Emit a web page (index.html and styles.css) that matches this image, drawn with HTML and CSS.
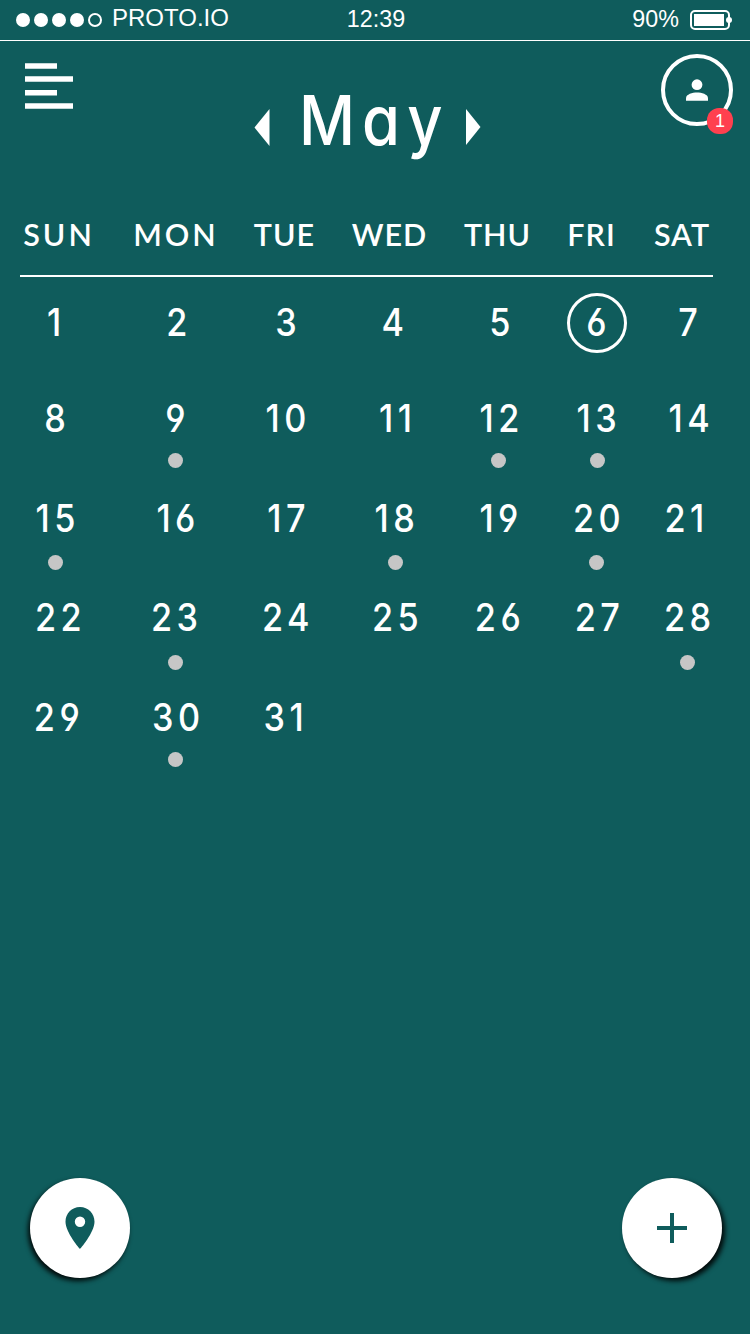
FILE: index.html
```html
<!DOCTYPE html>
<html lang="en">
<head>
<meta charset="utf-8">
<title>Calendar</title>
<link rel="stylesheet" href="styles.css">
</head>
<body>
<div class="screen">
  <header class="status">
    <div class="carrier">
      <span class="signal"><i></i><i></i><i></i><i></i><i class="hollow"></i></span>
      <span class="carrier-name">PROTO.IO</span>
    </div>
    <div class="clock">12:39</div>
    <div class="power">
      <span>90%</span>
      <svg class="battery" width="44" height="22" viewBox="0 0 44 22"><rect x="2" y="2" width="38" height="18" rx="4" fill="none" stroke="#fff" stroke-width="2"/><rect x="5" y="5" width="30" height="12" fill="#fff"/><circle cx="40" cy="11" r="3" fill="#fff"/></svg>
    </div>
  </header>
  <nav class="toolbar">
    <svg class="menu" width="48" height="46" viewBox="0 0 48 46"><path d="M0 .2h32v5.500H0zM0 13.300h48v5.500H0zM0 27h32v5.500H0zM0 40.200h48v5.500H0z" fill="#fff"/></svg>
    <div class="month">
      <svg width="17" height="38" viewBox="0 0 17 38"><path d="M15.500 0v37L.5 18.500z" fill="#fff"/></svg>
      <h1>May</h1>
      <svg width="17" height="38" viewBox="0 0 17 38"><path d="M0 0v36l14.500-18z" fill="#fff"/></svg>
    </div>
    <div class="profile">
      <svg width="28" height="28" viewBox="0 0 28 28"><circle cx="14" cy="8.700" r="5.400" fill="#fff"/><path d="M3 24.700v-2.500c0-4 6.500-5.700 11-5.700s11 1.700 11 5.700v2.500z" fill="#fff"/></svg>
      <span class="badge">1</span>
    </div>
  </nav>
  <main>
    <div class="week names">
      <span class="r1 wide">SUN</span><span class="l2 wide">MON</span><span class="l3">TUE</span><span class="l7">WED</span><span class="l3">THU</span><span class="l7">FRI</span><span class="l7">SAT</span>
    </div>
    <div class="week first">
      <div class="day"><b class="l2">1</b></div><div class="day"><b class="r1">2</b></div><div class="day"><b>3</b></div><div class="day"><b class="l2">4</b></div><div class="day"><b class="r1">5</b></div><div class="day today"><b class="l1">6</b></div><div class="day"><b>7</b></div>
    </div>
    <div class="week second">
      <div class="day"><b>8</b></div><div class="day event"><b>9</b></div><div class="day"><b>10</b></div><div class="day"><b>11</b></div><div class="day event"><b>12</b></div><div class="day event"><b>13</b></div><div class="day"><b class="r2">14</b></div>
    </div>
    <div class="week third">
      <div class="day event"><b>15</b></div><div class="day"><b>16</b></div><div class="day"><b>17</b></div><div class="day event"><b>18</b></div><div class="day"><b>19</b></div><div class="day event"><b>20</b></div><div class="day"><b class="l3">21</b></div>
    </div>
    <div class="week fourth">
      <div class="day"><b class="r3">22</b></div><div class="day event"><b class="l1">23</b></div><div class="day"><b>24</b></div><div class="day"><b>25</b></div><div class="day"><b class="l1">26</b></div><div class="day"><b>27</b></div><div class="day event"><b>28</b></div>
    </div>
    <div class="week fifth">
      <div class="day"><b class="r1">29</b></div><div class="day event"><b>30</b></div><div class="day"><b class="l2">31</b></div>
    </div>
  </main>
  <footer class="actions">
    <div class="fab left"><svg width="30" height="42" viewBox="0 0 30 42"><path d="M15 0C6.700 0 .5 6.500.5 14.700.5 25.500 15 42 15 42s14.500-16.500 14.500-27.300C29.500 6.500 23.300 0 15 0zm0 20a5.200 5.200 0 1 1 0-10.400A5.200 5.200 0 0 1 15 20z" fill="#0f5c5c"/></svg></div>
    <div class="fab right"><svg width="30" height="30" viewBox="0 0 30 30"><path d="M13 0h4v13h13v4H17v13h-4V17H0v-4h13z" fill="#0f5c5c"/></svg></div>
  </footer>
</div>
</body>
</html>
```
FILE: styles.css
```css
* { box-sizing: border-box; }
body { margin: 0; background: #0f5c5c; color: #fff; font-family: Inter, sans-serif; }
svg { display: block; flex: none; }
.screen { width: 750px; height: 1334px; display: flex; flex-direction: column; overflow: hidden; }

.status { height: 41px; border-bottom: 1px solid #fff; display: grid; grid-template-columns: 300px 152px 1fr; font: 24px/36px "Liberation Sans", Arial, sans-serif; }
.carrier { display: flex; padding-left: 16px; }
.signal { display: flex; gap: 4px; padding-top: 13px; margin-right: 10px; }
.signal i { width: 14px; height: 14px; border-radius: 50%; background: #fff; }
.signal .hollow { background: none; border: 2px solid #fff; }
.clock { text-align: center; padding-top: 1px; font-size: 23.300px; }
.power { display: flex; justify-content: flex-end; gap: 10px; padding: 1px 17px 0 0; font-size: 23.300px; }
.battery { margin-top: 8px; }

.toolbar { height: 164px; display: flex; align-items: flex-start; }
.menu { margin: 22px 0 0 25px; }
.month { display: flex; align-items: center; margin: 33px 0 0 181px; height: 108px; }
.month h1 { margin: 0; width: 195px; text-align: center; padding: 0 0 16px 13px; font-size: 69px; line-height: 84px; font-weight: 550; letter-spacing: 8px; transform: scaleX(.89); font-feature-settings: "cv11", "ss03"; }
.profile { width: 72px; height: 72px; border: 4px solid #fff; border-radius: 50%; margin: 13px 17px 0 auto; display: flex; align-items: center; justify-content: center; position: relative; }
.badge { position: absolute; right: -4px; bottom: -12px; width: 26px; height: 26px; border-radius: 12px; background: #ff404f; font: 18px/26px "Liberation Sans", Arial, sans-serif; text-align: center; }

.week { display: grid; grid-template-columns: 111px 129px 92px 126px 82px 114px 67px; justify-items: center; }
.names { height: 72px; font: 600 30.500px/58px Lato, sans-serif; letter-spacing: 1px; }
.names span { white-space: nowrap; padding-left: 3px; }
.names .wide { letter-spacing: 3px; padding-left: 5px; }
main { background: linear-gradient(#fff, #fff) 20px 70px / 693px 2px no-repeat; }
.first { height: 106px; padding-top: 16px; }
.second { height: 100px; padding-top: 6px; }
.third, .fourth, .fifth { padding-top: 6px; }
.third { height: 99px; }
.fourth { height: 100px; }
.day { height: 60px; display: flex; flex-direction: column; align-items: center; }
.day b { flex: none; height: 60px; font: 500 38.500px/58px Inter, sans-serif; letter-spacing: 5px; padding-left: 5px; transform: scaleX(.89); font-feature-settings: "cv03", "cv04"; }
.today { width: 60px; border: 3px solid #fff; border-radius: 50%; }
.today b { line-height: 52px; }
.event::after { content: ""; flex: none; width: 15px; height: 15px; border-radius: 50%; background: #c6c6c6; margin-top: 4px; }
.third .event::after { margin-top: 6px; }
.fourth .event::after { margin-top: 7px; }
.week .l1 { margin-left: -2px; }
.week .l2 { margin-left: -4px; }
.week .l3 { margin-left: -6px; }
.week .l7 { margin-left: -14px; }
.week .r1 { margin-left: 2px; }
.week .r2 { margin-left: 4px; }
.week .r3 { margin-left: 6px; }

.actions { margin-top: auto; padding: 0 28px 56px 30px; display: flex; justify-content: space-between; }
.fab { width: 100px; height: 100px; border-radius: 50%; background: #fff; display: flex; align-items: center; justify-content: center; }
.left { box-shadow: -2px 3px 5px rgba(0, 0, 0, .9); }
.right { box-shadow: 3px 3px 5px rgba(0, 0, 0, .9); }
```
